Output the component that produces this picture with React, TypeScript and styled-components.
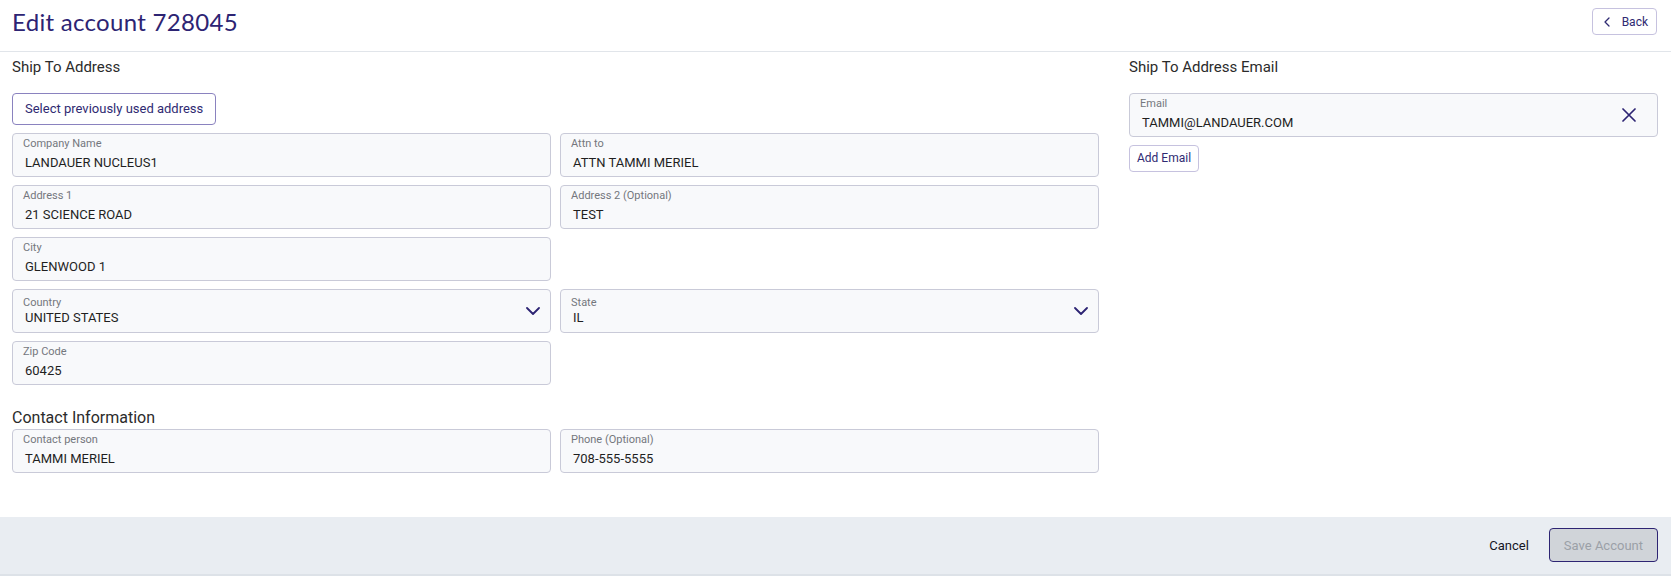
import React from "react";
import styled, { createGlobalStyle } from "styled-components";

const GlobalStyle = createGlobalStyle`
  html, body {
    margin: 0;
    padding: 0;
    background: #ffffff;
  }
  body {
    font-family: Roboto, "Liberation Sans", Arial, sans-serif;
    color: #202124;
  }
  * {
    box-sizing: border-box;
  }
`;

const Page = styled.div`
  min-height: 100vh;
  display: flex;
  flex-direction: column;
`;

const Header = styled.header`
  display: flex;
  align-items: center;
  justify-content: space-between;
  padding: 8px 14px 16px 12px;
  border-bottom: 1px solid #e1e5ea;
`;

const Title = styled.h1`
  margin: 0;
  font-family: Lato, "Open Sans", sans-serif;
  font-size: 24px;
  font-weight: 400;
  letter-spacing: 0.3px;
  line-height: 27px;
  color: #2d2473;
`;

const OutlineButton = styled.button<{ $size?: number; $strong?: boolean }>`
  display: inline-flex;
  align-items: center;
  justify-content: center;
  gap: 12px;
  font-family: Roboto, "Liberation Sans", sans-serif;
  font-size: ${p => p.$size ?? 12}px;
  color: #2f2a72;
  background: #ffffff;
  border: 1px solid ${p => (p.$strong ? "#8a82bf" : "#c6c2df")};
  border-radius: 4px;
  cursor: pointer;
`;

const BackButton = styled(OutlineButton)`
  height: 27px;
  padding: 0 8px 0 11px;
`;

const SelectAddressButton = styled(OutlineButton)`
  height: 32px;
  padding: 0 12px;
  margin-top: 17px;
  align-self: flex-start;
`;

const AddEmailButton = styled(OutlineButton)`
  height: 27px;
  padding: 0 7px;
  margin-top: 8px;
  align-self: flex-start;
`;

const Body = styled.main`
  flex: 1;
  display: grid;
  grid-template-columns: minmax(0, 1087fr) minmax(0, 529fr);
  column-gap: 30px;
  padding: 5.5px 13px 0 12px;
`;

const Column = styled.section`
  display: flex;
  flex-direction: column;
`;

const SectionTitle = styled.h2<{ $large?: boolean }>`
  margin: ${p => (p.$large ? "23px 0 2.5px" : "0")};
  font-size: ${p => (p.$large ? 16 : 15)}px;
  line-height: ${p => (p.$large ? 19 : 18)}px;
  font-weight: 400;
  color: #2b2b2b;
`;

const FieldGrid = styled.div<{ $top?: number }>`
  display: grid;
  grid-template-columns: minmax(0, 1fr) minmax(0, 1fr);
  gap: 8px 9px;
  margin-top: ${p => p.$top ?? 0}px;
`;

const FieldBox = styled.div<{ $iconPad?: number; $top?: number }>`
  height: 44px;
  display: flex;
  align-items: stretch;
  margin-top: ${p => p.$top ?? 0}px;
  padding: 0 ${p => p.$iconPad ?? 10}px 0 10px;
  background: #f8f9fb;
  border: 1px solid #c9cad8;
  border-radius: 4px;
`;

const FieldBody = styled.div`
  flex: 1;
  min-width: 0;
  display: flex;
  flex-direction: column;
`;

const FieldLabel = styled.span<{ $select?: boolean }>`
  padding-top: ${p => (p.$select ? 6 : 3)}px;
  font-size: 11px;
  line-height: 13px;
  color: #74777d;
`;

const FieldValue = styled.span<{ $select?: boolean }>`
  margin-top: ${p => (p.$select ? 1.5 : 5)}px;
  padding-left: 2px;
  font-size: 13px;
  line-height: 16px;
  color: #1f1f1f;
  white-space: nowrap;
`;

const IconSlot = styled.span`
  display: flex;
  align-items: center;
  color: #2d2473;
`;

const Footer = styled.footer`
  height: 59.5px;
  display: flex;
  align-items: center;
  justify-content: flex-end;
  padding: 0 13px 0 12px;
  background: #e9edf2;
  border-bottom: 2px solid #dde2e8;
`;

const TextButton = styled.button`
  height: 34px;
  padding: 0 12px;
  margin-right: 8px;
  font-family: Roboto, "Liberation Sans", sans-serif;
  font-size: 13px;
  color: #15151f;
  background: transparent;
  border: none;
  cursor: pointer;
`;

const SaveButton = styled.button`
  height: 34px;
  padding: 0 14px;
  font-family: Roboto, "Liberation Sans", sans-serif;
  font-size: 13px;
  color: #9ba0a7;
  background: #d0d4d9;
  border: 1px solid #2d2473;
  border-radius: 4px;
`;

const ChevronDown = () => (
  <svg width="14" height="8" viewBox="0 0 14 8" fill="none">
    <path d="M1 1 L7 7 L13 1" stroke="currentColor" strokeWidth="1.8" strokeLinecap="round" strokeLinejoin="round" />
  </svg>
);

const ChevronLeft = () => (
  <svg width="6" height="10" viewBox="0 0 6 10" fill="none">
    <path d="M5 1 L1 5 L5 9" stroke="currentColor" strokeWidth="1.3" strokeLinecap="round" strokeLinejoin="round" />
  </svg>
);

const CloseIcon = () => (
  <svg width="14" height="14" viewBox="0 0 14 14" fill="none">
    <path d="M1 1 L13 13 M13 1 L1 13" stroke="currentColor" strokeWidth="1.7" strokeLinecap="round" />
  </svg>
);

type FieldProps = {
  label: string;
  value: string;
  select?: boolean;
};

const Field = ({ label, value, select }: FieldProps) => (
  <FieldBox>
    <FieldBody>
      <FieldLabel $select={select}>{label}</FieldLabel>
      <FieldValue $select={select}>{value}</FieldValue>
    </FieldBody>
    {select && (
      <IconSlot>
        <ChevronDown />
      </IconSlot>
    )}
  </FieldBox>
);

export default function App() {
  return (
    <Page>
      <GlobalStyle />
      <Header>
        <Title>Edit account 728045</Title>
        <BackButton>
          <ChevronLeft />
          Back
        </BackButton>
      </Header>

      <Body>
        <Column>
          <SectionTitle>Ship To Address</SectionTitle>
          <SelectAddressButton $size={13} $strong>
            Select previously used address
          </SelectAddressButton>
          <FieldGrid $top={8}>
            <Field label="Company Name" value="LANDAUER NUCLEUS1" />
            <Field label="Attn to" value="ATTN TAMMI MERIEL" />
            <Field label="Address 1" value="21 SCIENCE ROAD" />
            <Field label="Address 2 (Optional)" value="TEST" />
            <Field label="City" value="GLENWOOD 1" />
            <div />
            <Field label="Country" value="UNITED STATES" select />
            <Field label="State" value="IL" select />
            <Field label="Zip Code" value="60425" />
          </FieldGrid>

          <SectionTitle $large>Contact Information</SectionTitle>
          <FieldGrid>
            <Field label="Contact person" value="TAMMI MERIEL" />
            <Field label="Phone (Optional)" value="708-555-5555" />
          </FieldGrid>
        </Column>

        <Column>
          <SectionTitle>Ship To Address Email</SectionTitle>
          <FieldBox $iconPad={21} $top={17}>
            <FieldBody>
              <FieldLabel>Email</FieldLabel>
              <FieldValue>TAMMI@LANDAUER.COM</FieldValue>
            </FieldBody>
            <IconSlot>
              <CloseIcon />
            </IconSlot>
          </FieldBox>
          <AddEmailButton>Add Email</AddEmailButton>
        </Column>
      </Body>

      <Footer>
        <TextButton>Cancel</TextButton>
        <SaveButton disabled>Save Account</SaveButton>
      </Footer>
    </Page>
  );
}
